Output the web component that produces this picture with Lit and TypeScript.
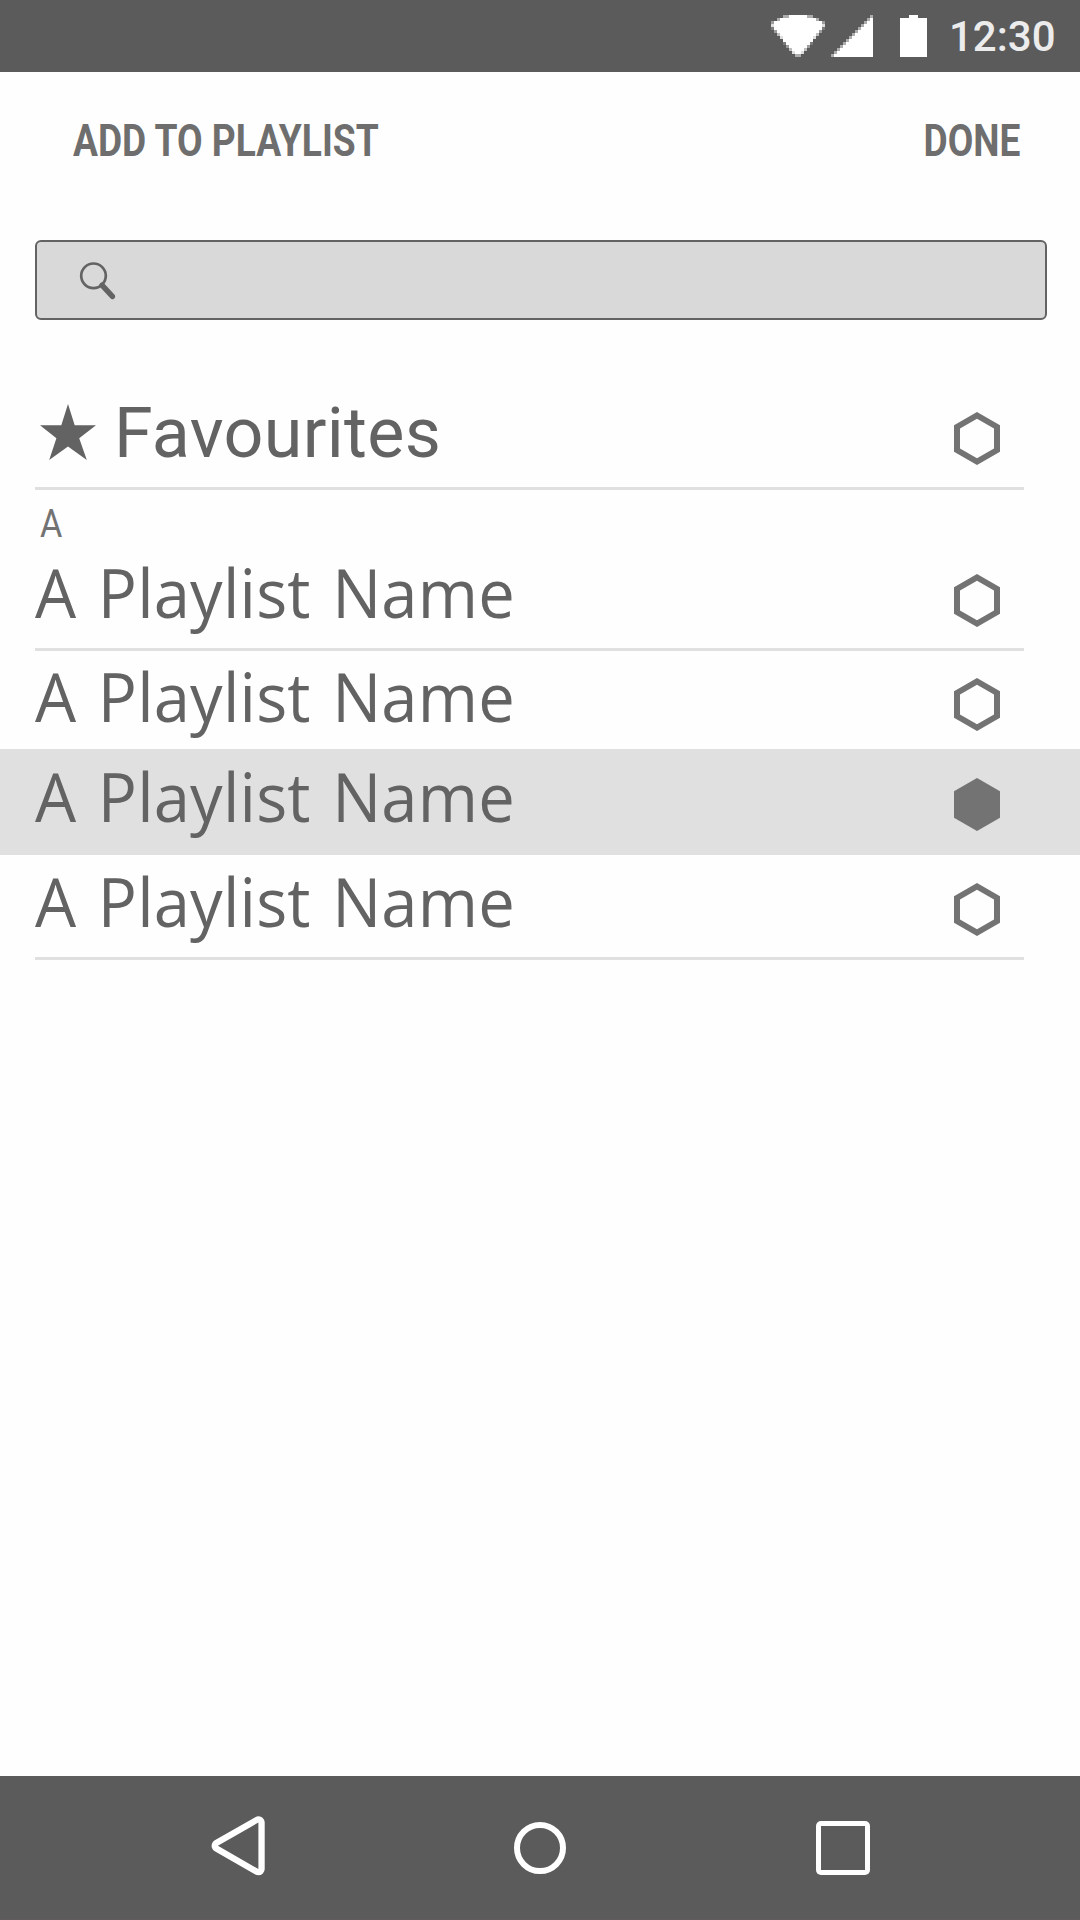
import { LitElement, html, css, svg } from "lit";
import { customElement, property } from "lit/decorators.js";

type Cell = { x: number; y: number; w: number; a: number };

/** Coarse cells (3px each) that make up the wifi fan. */
function wifiCells(): Cell[] {
  const cells: Cell[] = [
    { x: 4, y: 0, w: 10, a: 0.5 }, { x: 6, y: 0, w: 6, a: 1 },
    { x: 2, y: 1, w: 14, a: 0.5 }, { x: 3, y: 1, w: 12, a: 1 },
    { x: 0, y: 2, w: 18, a: 0.4 }, { x: 1, y: 2, w: 16, a: 1 },
    { x: 0, y: 3, w: 18, a: 0.8 }, { x: 1, y: 3, w: 16, a: 1 },
  ];
  for (let r = 4; r < 13; r++) {
    const s = (r - 3) * 0.8;
    const f = Math.floor(s);
    const c = f + 1;
    cells.push({ x: f, y: r, w: 18 - 2 * f, a: 1 - (s - f) });
    cells.push({ x: c, y: r, w: 18 - 2 * c, a: 1 });
  }
  cells.push({ x: 8, y: 13, w: 2, a: 0.5 });
  return cells;
}

/** Coarse cells for the signal triangle. */
function signalCells(): Cell[] {
  const cells: Cell[] = [];
  for (let r = 0; r < 14; r++) {
    cells.push({ x: 13 - r, y: r, w: 1, a: 0.5 });
    if (r) cells.push({ x: 14 - r, y: r, w: r, a: 1 });
  }
  return cells;
}

const drawCells = (cells: Cell[]) =>
  cells.map((c) => svg`<rect x=${c.x} y=${c.y} width=${c.w} height="1" fill="#fff" fill-opacity=${c.a}></rect>`);

@customElement("status-bar")
class StatusBar extends LitElement {
  static styles = css`
    :host { display: flex; height: 72px; box-sizing: border-box; background: #5b5b5b; justify-content: flex-end; align-items: flex-start; padding: 15px 24px 0 0; }
    svg { display: block; flex: none; }
    .wifi { margin-right: 6px; }
    .signal { margin-right: 27px; }
    .battery { margin-right: 22px; }
    .time { font: 500 42px/42px Roboto, sans-serif; color: #ececec; width: 107px; margin-top: 1px; white-space: nowrap; }
  `;
  render() {
    return html`
      <svg class="wifi" width="54" height="42" viewBox="0 0 18 14" shape-rendering="crispEdges">${drawCells(wifiCells())}</svg>
      <svg class="signal" width="42" height="42" viewBox="0 0 14 14" shape-rendering="crispEdges">${drawCells(signalCells())}</svg>
      <svg class="battery" width="27" height="42" viewBox="0 0 9 14"><path fill="#fff" d="M0 1H3V0H6V1H9V14H0Z"></path></svg>
      <span class="time">12:30</span>
    `;
  }
}

@customElement("hex-check")
class HexCheck extends LitElement {
  @property({ type: Boolean }) checked = false;
  static styles = css`
    :host { display: block; flex: none; width: 46px; height: 53px; }
    svg { display: block; }
    path { fill: #737373; fill-rule: evenodd; }
  `;
  render() {
    const outer = "M23 0L46 13.2V39.8L23 53L0 39.8V13.2Z";
    const inner = "M23 6.8L6 16.6V36.4L23 46.2L40 36.4V16.6Z";
    return html`<svg width="46" height="53" viewBox="0 0 46 53"><path d=${this.checked ? outer : outer + inner}></path></svg>`;
  }
}

@customElement("nav-bar")
class NavBar extends LitElement {
  static styles = css`
    :host { display: flex; height: 144px; box-sizing: border-box; background: #5b5b5b; border-bottom: 1px solid #635b5c; padding: 0 208px; justify-content: space-between; align-items: flex-start; }
    svg { display: block; margin-top: 36px; }
  `;
  render() {
    return html`
      <svg width="60" height="72" viewBox="208 1812 60 72">
        <path d="M258.4 1822.6V1869L217.9 1845.8Z" fill="#fff" stroke="#fff" stroke-width="12.6" stroke-linejoin="round"></path>
        <path d="M258.4 1822.6V1869L217.9 1845.8Z" fill="#5b5b5b"></path>
      </svg>
      <svg width="60" height="72" viewBox="510 1812 60 72"><circle cx="540" cy="1848" r="23" fill="none" stroke="#fff" stroke-width="6"></circle></svg>
      <svg width="60" height="72" viewBox="812 1812 60 72">
        <rect x="816" y="1821" width="54" height="54" rx="5" fill="#fff"></rect>
        <rect x="821" y="1826" width="44" height="44" fill="#5b5b5b"></rect>
      </svg>
    `;
  }
}

@customElement("app-root")
class AppRoot extends LitElement {
  static styles = css`
    :host { display: flex; flex-direction: column; width: 1080px; height: 1920px; background: #fefefe; overflow: hidden; font-family: Roboto, sans-serif; color: #636363; }
    .header { display: flex; justify-content: space-between; height: 168px; box-sizing: border-box; padding: 45px 60px 0 73px; }
    .action { font: 700 43.5px/50px Roboto, sans-serif; color: #6e6e6e; white-space: nowrap; transform: scaleX(0.854); }
    .title { transform-origin: 0 50%; }
    .done { transform-origin: 100% 50%; }
    .search { flex: none; width: 1012px; height: 80px; box-sizing: border-box; margin-left: 35px; border: 2px solid #636363; border-radius: 6px; background: #d9d9d9; padding: 18px 0 0 41px; }
    .search svg { display: block; }
    .list { flex: 1; }
    .row { display: flex; align-items: flex-end; justify-content: space-between; box-sizing: border-box; padding: 0 80px 18px 35px; height: 98px; }
    .rule { height: 3px; margin: 0 56px 0 35px; background: #e0e0e0; }
    .row.fav { height: 167px; padding-bottom: 22px; }
    .row.r1 { height: 103px; padding-bottom: 21px; }
    .row.on { height: 106px; padding-bottom: 24px; background: #e0e0e0; }
    .row.r4 { height: 102px; padding-bottom: 21px; }
    .name { font: 400 68.5px/70px "Open Sans", "Noto Sans", sans-serif; white-space: nowrap; height: 70px; word-spacing: 4.6px; letter-spacing: 0.2px; transform: scaleX(0.95); transform-origin: 0 50%; }
    .star { display: block; flex: none; margin: 0 18px 5px 5px; }
    .favname { flex: 1; font: 400 70px/70px Roboto, sans-serif; letter-spacing: 0.33px; height: 70px; margin-bottom: -3px; white-space: nowrap; }
    .letter { height: 55px; padding: 13px 0 0 40px; box-sizing: border-box; font: 400 38px/42px Roboto, sans-serif; color: #737373; }
    .letter span { display: inline-block; transform: scaleX(0.9); transform-origin: 0 50%; }
  `;
  render() {
    return html`
      <status-bar></status-bar>
      <div class="header"><span class="action title">ADD TO PLAYLIST</span><span class="action done">DONE</span></div>
      <div class="search">
        <svg width="40" height="42" viewBox="78 260 40 42">
          <circle cx="93.5" cy="275.8" r="12.3" fill="none" stroke="#636363" stroke-width="2.7"></circle>
          <path d="M102 285.2L112.4 296.4" stroke="#636363" stroke-width="5.4" stroke-linecap="round"></path>
        </svg>
      </div>
      <div class="list">
        <div class="row fav">
          <svg class="star" width="56" height="56" viewBox="0 0 56 56"><path fill="#636363" d="M28 0L34.7 21.2H56L39.2 34.3L46.8 56L28 42.6L9.2 56L16.4 34.3L0 21.2H21.3Z"></path></svg>
          <span class="favname">Favourites</span><hex-check></hex-check>
        </div>
        <div class="rule"></div>
        <div class="letter"><span>A</span></div>
        <div class="row r1"><span class="name">A Playlist Name</span><hex-check></hex-check></div>
        <div class="rule"></div>
        <div class="row"><span class="name">A Playlist Name</span><hex-check></hex-check></div>
        <div class="row on"><span class="name">A Playlist Name</span><hex-check checked></hex-check></div>
        <div class="row r4"><span class="name">A Playlist Name</span><hex-check></hex-check></div>
        <div class="rule"></div>
      </div>
      <nav-bar></nav-bar>
    `;
  }
}
